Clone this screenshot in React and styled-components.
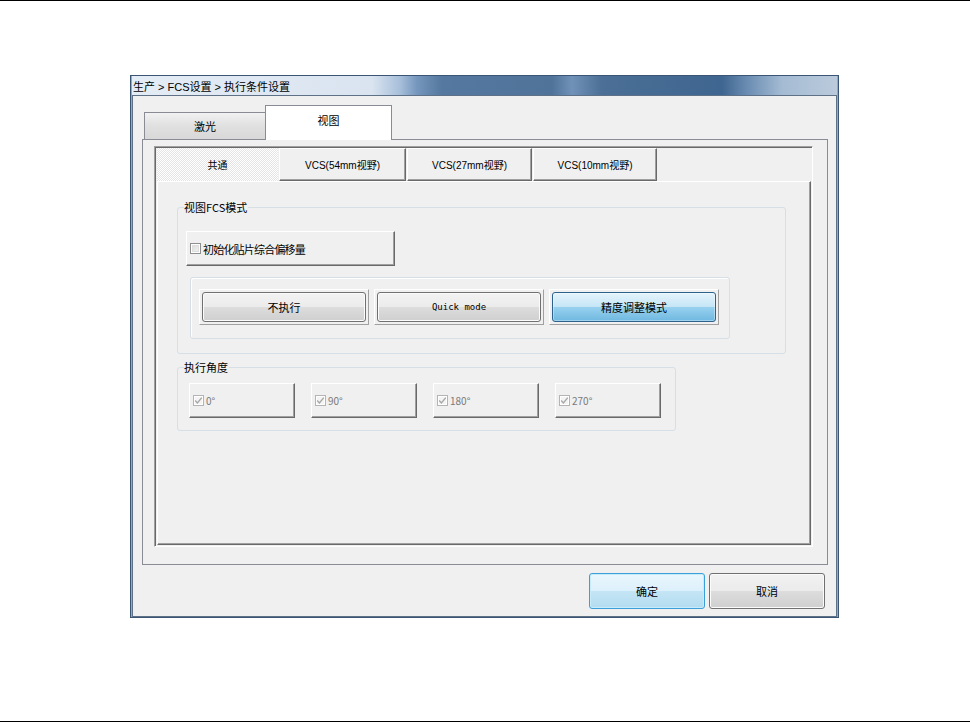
import React from 'react';
import styled, { createGlobalStyle, css } from 'styled-components';

const GlobalStyle = createGlobalStyle`
  html, body { margin: 0; padding: 0; background: #ffffff; }
  body { font-family: "Liberation Sans", "Noto Sans CJK SC", sans-serif; color: #000; }
  * { box-sizing: border-box; }
`;

const Page = styled.div`
  width: 970px;
  height: 722px;
  border-top: 1px solid #000;
  border-bottom: 1px solid #000;
  padding: 74px 0 0 130px;
`;

const Window = styled.div`
  width: 709px;
  height: 543px;
  border: 1px solid #3b5574;
  background: #8fa9c7;
  padding: 0 1px 0 1px;
  display: flex;
  flex-direction: column;
`;

const TitleBar = styled.div`
  height: 19px;
  flex: none;
  display: flex;
  align-items: center;
  padding-left: 1px;
  font-size: 11px;
  color: #000;
  background: linear-gradient(90deg,
    #e4ecf5 0px, #dae4f0 240px, #a7bfda 268px, #7596bd 285px,
    #54789f 310px, #4f7399 420px, #7192b8 440px, #4b6f96 470px,
    #3f6690 590px, #6a8cb2 615px, #a4bbd3 650px, #bccbdc 707px);
`;

const Client = styled.div`
  flex: 1;
  border: 1px solid #5f7187;
  background: #f0f0f0;
  padding: 9px 9px 0 9px;
  display: flex;
  flex-direction: column;
`;

const OuterTabStrip = styled.div`
  height: 34px;
  display: flex;
  align-items: flex-end;
  padding-left: 2px;
`;

const OuterTab = styled.div`
  width: ${p => p.$w}px;
  display: flex;
  align-items: center;
  justify-content: center;
  font-size: 11px;
  border: 1px solid #898c95;
  ${p => p.$active ? css`
    height: 35px;
    margin-bottom: -1px;
    border-bottom: none;
    background: #ffffff;
    padding-bottom: 6px;
    position: relative;
    z-index: 1;
  ` : css`
    height: 27px;
    border-right: none;
    border-bottom: none;
    background: linear-gradient(#f2f2f2, #e1e1e1 45%, #d8d8d8);
  `}
`;

const OuterPanel = styled.div`
  width: 686px;
  height: 426px;
  border: 1px solid #898c95;
  background: #f0f0f0;
  padding: 6px 0 0 11px;
`;

const SunkenFrame = styled.div`
  width: 659px;
  height: 401px;
  border-style: solid;
  border-width: 1px;
  border-color: #a0a0a0 #ffffff #ffffff #a0a0a0;
  box-shadow: inset 1px 1px 0 #696969;
  padding: 1px 1px 1px 2px;
  display: flex;
  flex-direction: column;
`;

const InnerTabRow = styled.div`
  height: 33px;
  display: flex;
  gap: 1px;
  flex: none;
`;

const raised = css`
  border-style: solid;
  border-width: 1px;
  border-color: #ffffff #696969 #696969 #ffffff;
  box-shadow: inset -1px -1px 0 #a0a0a0;
  background: #f0f0f0;
`;

const InnerTab = styled.div`
  width: ${p => p.$w}px;
  display: flex;
  align-items: center;
  justify-content: center;
  font-size: 10px;
  ${p => p.$active ? css`
    background-color: #ffffff;
    background-image: repeating-conic-gradient(#ffffff 0 25%, #e4e4e4 0 50%);
    background-size: 2px 2px;
  ` : raised}
`;

const ContentPanel = styled.div`
  flex: 1;
  ${raised}
  padding: 20px 0 0 19px;
`;

const Group = styled.fieldset`
  width: ${p => p.$w}px;
  margin: ${p => p.$mt || 0}px 0 0 0;
  padding: 0;
  min-width: 0;
  border: 1px solid #d5dfe5;
  border-radius: 3px;
`;

const GroupLabel = styled.legend`
  margin-left: 6px;
  padding: 0 1px 0 0;
  font-size: 11px;
  line-height: 11px;
  font-family: "Noto Sans CJK SC", sans-serif;
  color: #000;
`;

const GroupBody = styled.div`
  padding: ${p => p.$pad};
`;

const CheckButton = styled.div`
  ${raised}
  width: ${p => p.$w}px;
  height: 35px;
  display: flex;
  align-items: center;
  gap: 2px;
  padding-left: 3px;
  font-size: ${p => p.$fs}px;
  letter-spacing: ${p => p.$ls || 0}px;
  color: ${p => p.$disabled ? '#7a7a7a' : '#000'};
  font-family: "Noto Sans CJK SC", sans-serif;
`;

const Box = styled.span`
  width: 11px;
  height: 11px;
  flex: none;
  display: flex;
  align-items: center;
  justify-content: center;
  border: 1px solid ${p => p.$disabled ? '#b4b4b4' : '#8e8f8f'};
  background: ${p => p.$disabled ? '#f4f4f4' : 'linear-gradient(135deg, #d8d8d8, #f6f6f6)'};
  box-shadow: inset 0 0 0 1px #ffffff${p => p.$disabled ? '' : ', inset 0 0 0 2px #dedede'};
`;

const AngleRow = styled.div`
  display: flex;
  gap: 16px;
`;

const SubGroup = styled.div`
  width: 540px;
  height: 62px;
  margin: 11px 0 0 4px;
  border: 1px solid #d5dfe5;
  border-radius: 3px;
  box-shadow: inset 1px 1px 0 #ffffff;
  padding: 11px 0 0 8px;
  display: flex;
  gap: 5px;
`;

const ButtonFrame = styled.div`
  width: 170px;
  height: 36px;
  border: 1px solid;
  border-color: #ffffff #a0a0a0 #a0a0a0 #ffffff;
  padding: 2px;
  display: flex;
`;

const WinButton = styled.div`
  flex: ${p => p.$w ? 'none' : 1};
  width: ${p => p.$w ? `${p.$w}px` : 'auto'};
  height: ${p => p.$h ? `${p.$h}px` : 'auto'};
  display: flex;
  align-items: center;
  justify-content: center;
  border-radius: 3px;
  font-size: ${p => p.$fs || 11}px;
  font-family: ${p => p.$mono ? '"DejaVu Sans Mono", monospace' : '"Noto Sans CJK SC", sans-serif'};
  ${p => p.$variant === 'pressed' ? css`
    border: 1px solid #2c628b;
    background: linear-gradient(#e5f4fc 0%, #c4e5f6 50%, #98d1ef 50%, #6fb8e0 100%);
    box-shadow: inset 0 0 0 1px rgba(255,255,255,0.35);
  ` : p.$variant === 'default' ? css`
    border: 1px solid #3c9fd8;
    background: linear-gradient(#eaf6fd 0%, #dcf0fb 50%, #c4e5f5 50%, #b3dcf0 100%);
    box-shadow: inset 0 0 0 1px #c6ecfb;
  ` : css`
    border: 1px solid #707070;
    background: linear-gradient(#f2f2f2 0%, #ebebeb 50%, #dddddd 50%, #cfcfcf 100%);
    box-shadow: inset 0 0 0 1px #fbfbfb;
  `}
`;

const FooterRow = styled.div`
  margin-top: 8px;
  padding-right: 2px;
  display: flex;
  justify-content: flex-end;
  gap: 4px;
`;

const Check = () => (
  <svg width="9" height="9" viewBox="0 0 9 9">
    <path d="M1.2 4.6 L3.4 6.9 L7.8 1.6" fill="none" stroke="#a7a7a7" strokeWidth="1.4" />
  </svg>
);

const innerTabs = [
  { label: '共通', w: 121, active: true },
  { label: 'VCS(54mm视野)', w: 127 },
  { label: 'VCS(27mm视野)', w: 125 },
  { label: 'VCS(10mm视野)', w: 124 },
];

const modes = [
  { label: '不执行' },
  { label: 'Quick mode', mono: true, fs: 9 },
  { label: '精度调整模式', variant: 'pressed' },
];

const angles = ['0°', '90°', '180°', '270°'];

export default function App() {
  return (
    <>
      <GlobalStyle />
      <Page>
        <Window>
          <TitleBar>生产 &gt; FCS设置 &gt; 执行条件设置</TitleBar>
          <Client>
            <OuterTabStrip>
              <OuterTab $w={121}>激光</OuterTab>
              <OuterTab $w={127} $active>视图</OuterTab>
            </OuterTabStrip>
            <OuterPanel>
              <SunkenFrame>
                <InnerTabRow>
                  {innerTabs.map(t => (
                    <InnerTab key={t.label} $w={t.w} $active={t.active}>{t.label}</InnerTab>
                  ))}
                </InnerTabRow>
                <ContentPanel>
                  <Group $w={609}>
                    <GroupLabel>视图FCS模式</GroupLabel>
                    <GroupBody $pad="18px 0 14px 8px">
                      <CheckButton $w={209} $fs={11} $ls={-0.8}>
                        <Box />
                        初始化贴片综合偏移量
                      </CheckButton>
                      <SubGroup>
                        {modes.map(m => (
                          <ButtonFrame key={m.label}>
                            <WinButton $variant={m.variant} $mono={m.mono} $fs={m.fs}>{m.label}</WinButton>
                          </ButtonFrame>
                        ))}
                      </SubGroup>
                    </GroupBody>
                  </Group>
                  <Group $w={499} $mt={8}>
                    <GroupLabel>执行角度</GroupLabel>
                    <GroupBody $pad="10px 0 12px 11px">
                      <AngleRow>
                        {angles.map(a => (
                          <CheckButton key={a} $w={106} $fs={10} $disabled>
                            <Box $disabled><Check /></Box>
                            {a}
                          </CheckButton>
                        ))}
                      </AngleRow>
                    </GroupBody>
                  </Group>
                </ContentPanel>
              </SunkenFrame>
            </OuterPanel>
            <FooterRow>
              <WinButton $w={116} $h={36} $variant="default">确定</WinButton>
              <WinButton $w={116} $h={36}>取消</WinButton>
            </FooterRow>
          </Client>
        </Window>
      </Page>
    </>
  );
}
